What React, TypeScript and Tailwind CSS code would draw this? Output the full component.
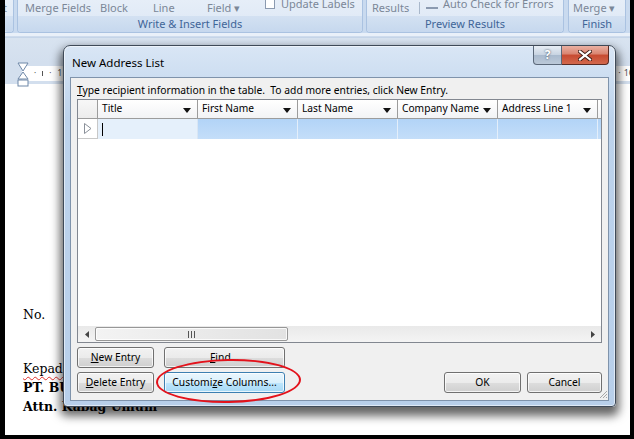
import type { ReactNode } from "react";
import clsx from "clsx";

const ui = "font-['Noto_Sans','Liberation_Sans',sans-serif]";

function RibbonGroup({ label, className, children }: { label: string; className?: string; children?: ReactNode }) {
  return (
    <div
      className={clsx(
        "flex h-[33px] shrink-0 flex-col rounded-b-[4px] border border-t-0 border-[#aac2e1] bg-[linear-gradient(#e6eef8,#dce7f5)]",
        className
      )}
    >
      <div className="flex h-[16px] items-center overflow-hidden text-[11px] text-[#7b8797]">{children}</div>
      <div className="flex h-[16px] items-center justify-center rounded-b-[3px] bg-[linear-gradient(#d3e1f2,#c6d8ee)] text-[11px] text-[#3f6598]">
        {label}
      </div>
    </div>
  );
}

function WinButton({ children, hot, className }: { children: ReactNode; hot?: boolean; className?: string }) {
  return (
    <div
      className={clsx(
        "flex h-[21px] shrink-0 items-center justify-center rounded-[3px] border text-[10.3px] text-black shadow-[inset_0_0_0_1px_rgba(255,255,255,0.75)]",
        hot
          ? "border-[#3c7fb1] bg-[linear-gradient(#eaf6fd_0%,#d9f0fc_50%,#bee6fd_51%,#a7d9f5_100%)]"
          : "border-[#707070] bg-[linear-gradient(#f2f2f2_0%,#ebebeb_50%,#dddddd_51%,#cfcfcf_100%)]",
        className
      )}
    >
      {children}
    </div>
  );
}

function DropArrow() {
  return (
    <svg width="8" height="5" viewBox="0 0 8 5" className="absolute right-[6px] top-[8px]">
      <path d="M0 0h8L4 5z" fill="#111" />
    </svg>
  );
}

function HeaderCell({ title }: { title: string }) {
  return (
    <div className="relative flex h-full w-[100px] shrink-0 items-center border-r border-[#9c9c9c] pl-[4px]">
      {title}
      <DropArrow />
    </div>
  );
}

const columns = ["Title", "First Name", "Last Name", "Company Name", "Address Line 1"];

function AddressGrid() {
  return (
    <div className="mt-[3px] flex h-[244px] w-[525px] flex-col border border-[#828790] bg-white text-[10.2px] text-black">
      <div className="flex h-[19px] border-b border-[#9c9c9c] bg-[linear-gradient(#ffffff,#f2f3f5)]">
        <div className="h-full w-[20px] shrink-0 border-r border-[#9c9c9c] bg-[linear-gradient(#f7f7f7,#ececec)]" />
        {columns.map((c) => (
          <HeaderCell key={c} title={c} />
        ))}
        <div className="flex-1" />
      </div>
      <div className="flex h-[20px]">
        <div className="flex h-full w-[20px] shrink-0 items-center justify-center border-r border-b border-[#c8c8c8] bg-white">
          <svg width="8" height="11" viewBox="0 0 8 11">
            <path d="M0.5 0.5L7 5.5L0.5 10.5z" fill="none" stroke="#8a9099" />
          </svg>
        </div>
        <div className="flex h-full w-[100px] shrink-0 items-center border-r border-[#d9e6f4] bg-[#e5f0fb] pl-[4px]">
          <div className="h-[13px] w-px bg-black" />
        </div>
        {[1, 2, 3, 4].map((i) => (
          <div key={i} className="h-full w-[100px] shrink-0 border-r border-[#e3eefa] bg-[linear-gradient(#b2d4f7,#c4def9)]" />
        ))}
        <div className="h-full w-[3px] bg-[linear-gradient(#b2d4f7,#c4def9)]" />
      </div>
      <div className="flex-1" />
      <div className="flex h-[16px] items-center bg-[linear-gradient(#e9e9e9,#f4f4f4)]">
        <div className="flex h-full w-[17px] items-center justify-center">
          <svg width="4" height="7" viewBox="0 0 4 7">
            <path d="M4 0v7L0 3.5z" fill="#444" />
          </svg>
        </div>
        <div className="flex h-[14px] w-[193px] items-center justify-center rounded-[2px] border border-[#979797] bg-[linear-gradient(90deg,#f3f3f3,#e2e2e2)] shadow-[inset_0_0_0_1px_rgba(255,255,255,0.8)]">
          <div className="flex gap-[2px]">
            <div className="h-[7px] w-px bg-[#555]" />
            <div className="h-[7px] w-px bg-[#555]" />
            <div className="h-[7px] w-px bg-[#555]" />
          </div>
        </div>
        <div className="flex-1" />
        <div className="flex h-full w-[17px] items-center justify-center">
          <svg width="4" height="7" viewBox="0 0 4 7">
            <path d="M0 0v7L4 3.5z" fill="#444" />
          </svg>
        </div>
      </div>
    </div>
  );
}

function Dialog() {
  return (
    <div className="absolute left-[63px] top-[45px] flex h-[362px] w-[553px] flex-col rounded-t-[7px] rounded-b-[4px] border border-[#3f4a58] bg-[linear-gradient(#d9e6f5,#bdd3ec_20%,#b8cfea)] shadow-[0_6px_10px_3px_rgba(0,0,0,0.6),inset_0_0_0_1px_rgba(255,255,255,0.55)]">
      <div className="flex h-[31px] shrink-0 items-start justify-between">
        <div className={clsx(ui, "pl-[8px] pt-[8px] text-[11.5px] text-black")}>New Address List</div>
        <div className="mr-[6px] flex">
          <div className="flex h-[19px] w-[29px] items-center justify-center rounded-bl-[4px] border border-t-0 border-[#5b6879] bg-[linear-gradient(#e8eef5,#c7d3e1_50%,#a9bace_51%,#bcc9d8)] text-[12px] font-bold text-white [text-shadow:0_0_2px_#2c3a4c]">
            ?
          </div>
          <div className="flex h-[19px] w-[47px] items-center justify-center rounded-br-[4px] border border-t-0 border-l-0 border-[#5a2a22] bg-[linear-gradient(#eab0a2,#d98470_45%,#c74a31_50%,#d2684c)]">
            <svg width="14" height="11" viewBox="0 0 14 11">
              <path d="M2 1.5l10 8M12 1.5l-10 8" stroke="#3b1b15" strokeWidth="4" strokeLinecap="square" />
              <path d="M2 1.5l10 8M12 1.5l-10 8" stroke="#fff" strokeWidth="2.2" strokeLinecap="square" />
            </svg>
          </div>
        </div>
      </div>
      <div className="mx-[6px] flex h-[324px] flex-col border border-[#7f93ab] bg-[#f0f0f0] px-[6px] pt-[6px]">
        <div className={clsx(ui, "h-[12px] whitespace-nowrap text-[10.3px] leading-[12px] text-black")}>
          <span className="underline">T</span>ype recipient information in the table.&nbsp; To add more entries, click New Entry.
        </div>
        <div className={ui}>
          <AddressGrid />
          <div className="mt-[4px] flex">
            <WinButton className="w-[77px]">
              <span className="underline">N</span>ew Entry
            </WinButton>
            <WinButton className="ml-[10px] w-[121px]">
              <span className="underline">F</span>ind...
            </WinButton>
          </div>
          <div className="mt-[4px] flex">
            <WinButton className="w-[77px]">
              <span className="underline">D</span>elete Entry
            </WinButton>
            <WinButton hot className="ml-[10px] w-[121px]">
              Customi<span className="underline">z</span>e Columns...
            </WinButton>
            <div className="flex-1" />
            <WinButton className="w-[77px]">OK</WinButton>
            <WinButton className="ml-[6px] w-[75px]">Cancel</WinButton>
          </div>
        </div>
        <div className="relative flex-1">
          <svg width="10" height="10" viewBox="0 0 10 10" className="absolute bottom-[1px] right-[-6px]">
            <path d="M9 2L2 9M9 5L5 9M9 8L8 9" stroke="#a7a7a7" strokeWidth="1" />
          </svg>
        </div>
      </div>
    </div>
  );
}

export default function App() {
  return (
    <div className="relative h-[439px] w-[634px] overflow-hidden bg-black">
      <div className="flex h-full flex-col overflow-hidden pb-[4px] pl-[5px] pr-[4px]">
        <div className={clsx(ui, "flex h-full flex-col overflow-hidden bg-white")}>
          {/* ribbon */}
          <div className="flex h-[33px] shrink-0 gap-[3px] bg-[#c9daef]">
            <RibbonGroup label="" className="w-[9px] rounded-bl-none border-l-0">
              <span className="-ml-[2px]">t</span>
            </RibbonGroup>
            <RibbonGroup label="Write & Insert Fields" className="w-[346px]">
              <span className="ml-[7px] w-[75px] shrink-0">Merge Fields</span>
              <span className="w-[53px] shrink-0">Block</span>
              <span className="w-[54px] shrink-0">Line</span>
              <span className="w-[58px] shrink-0">Field ▾</span>
              <span className="flex w-[16px] shrink-0 -translate-y-[4px]">
                <span className="h-[10px] w-[10px] border border-[#8b9ab0] bg-white" />
              </span>
              <span className="shrink-0 -translate-y-[4px] whitespace-nowrap">Update Labels</span>
            </RibbonGroup>
            <RibbonGroup label="Preview Results" className="w-[198px]">
              <span className="ml-[5px] w-[47px] shrink-0">Results</span>
              <span className="h-[12px] w-px shrink-0 bg-[#a9b8cb]" />
              <span className="ml-[6px] flex w-[17px] shrink-0 -translate-y-[4px]">
                <span className="h-[10px] w-[12px] border-b-2 border-[#8b9ab0]" />
              </span>
              <span className="shrink-0 -translate-y-[4px] whitespace-nowrap">Auto Check for Errors</span>
            </RibbonGroup>
            <RibbonGroup label="Finish" className="ml-[1px] w-[58px]">
              <span className="ml-[4px] whitespace-nowrap">Merge ▾</span>
            </RibbonGroup>
          </div>
          {/* band under ribbon */}
          <div className="h-[29px] shrink-0 bg-[linear-gradient(#e9f0f9_0px,#e9f0f9_3px,#b3c7e1_4px,#d8e3f0_5px,#d3dfee_100%)]" />
          {/* ruler */}
          <div className="relative flex h-[22px] shrink-0 items-center bg-[#d3dfee] pl-[17px]">
            <div className="flex h-[15px] flex-1 items-center justify-between bg-white pl-[12px] text-[8px] text-[#555]">
              <span className="flex items-center gap-[6px]">
                <span>·</span>
                <span className="h-[5px] w-px bg-[#555]" />
                <span>·</span>
                <span className="text-[9px]">1</span>
              </span>
              <span className="-mr-[4px] flex items-center gap-[3px] text-[9px]">
                <span>·</span>
                <span>16</span>
              </span>
            </div>
            <svg width="12" height="26" viewBox="0 0 12 26" className="absolute left-[12px] top-[0px]">
              <path d="M1 1h10L6 9z" fill="#fff" stroke="#6f88a8" />
              <path d="M6 10L11 17H1z" fill="#fff" stroke="#6f88a8" />
              <rect x="1" y="18" width="10" height="6" fill="#fff" stroke="#6f88a8" />
            </svg>
          </div>
          {/* page */}
          <div className="flex-1 bg-white pl-[18px] pt-[221px] font-['DejaVu_Serif',serif] text-[12.5px] leading-[19px] text-black">
            <div>No.</div>
            <div className="mt-[35px] whitespace-nowrap">
              <span className="underline decoration-[#e0302a] decoration-wavy decoration-1 underline-offset-[3px]">Kepada</span> Yth.
            </div>
            <div className="whitespace-nowrap font-bold">PT. BUANA</div>
            <div className="whitespace-nowrap font-bold">Attn. Kabag Umum</div>
          </div>
        </div>
      </div>
      <Dialog />
      <div className="absolute left-[156px] top-[359px] h-[44px] w-[145px] -rotate-[1deg] rounded-[50%] border-[2.5px] border-[#e3121b]" />
    </div>
  );
}
